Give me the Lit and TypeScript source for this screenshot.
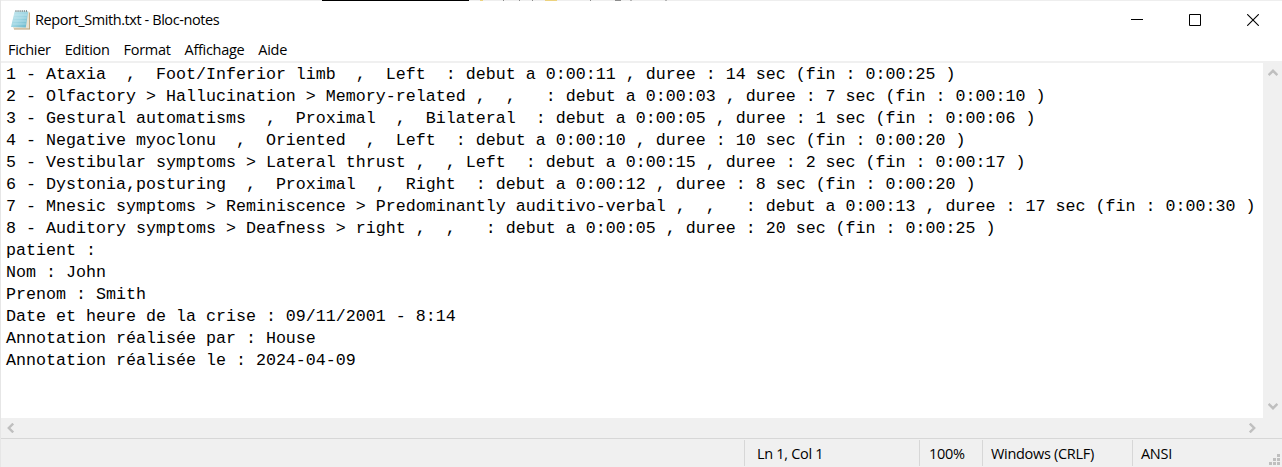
import { LitElement, html, css } from "lit";
import { customElement, property } from "lit/decorators.js";

const LINES = [
  "1 - Ataxia  ,  Foot/Inferior limb  ,  Left  : debut a 0:00:11 , duree : 14 sec (fin : 0:00:25 )",
  "2 - Olfactory > Hallucination > Memory-related ,  ,   : debut a 0:00:03 , duree : 7 sec (fin : 0:00:10 )",
  "3 - Gestural automatisms  ,  Proximal  ,  Bilateral  : debut a 0:00:05 , duree : 1 sec (fin : 0:00:06 )",
  "4 - Negative myoclonu  ,  Oriented  ,  Left  : debut a 0:00:10 , duree : 10 sec (fin : 0:00:20 )",
  "5 - Vestibular symptoms > Lateral thrust ,  , Left  : debut a 0:00:15 , duree : 2 sec (fin : 0:00:17 )",
  "6 - Dystonia,posturing  ,  Proximal  ,  Right  : debut a 0:00:12 , duree : 8 sec (fin : 0:00:20 )",
  "7 - Mnesic symptoms > Reminiscence > Predominantly auditivo-verbal ,  ,   : debut a 0:00:13 , duree : 17 sec (fin : 0:00:30 )",
  "8 - Auditory symptoms > Deafness > right ,  ,   : debut a 0:00:05 , duree : 20 sec (fin : 0:00:25 )",
  "patient :",
  "Nom : John",
  "Prenom : Smith",
  "Date et heure de la crise : 09/11/2001 - 8:14",
  "Annotation réalisée par : House",
  "Annotation réalisée le : 2024-04-09",
];

const MENUS = ["Fichier", "Edition", "Format", "Affichage", "Aide"];

@customElement("scroll-arrow")
class ScrollArrow extends LitElement {
  @property() dir = "up";
  static styles = css`
    :host { display: block; width: 10px; height: 10px; }
    svg { display: block; }
    path { fill: none; stroke: #bfbfbf; stroke-width: 2.4; }
  `;
  render() {
    const d: Record<string, string> = {
      up: "M0.6 7.2L5 2.8L9.4 7.2",
      down: "M0.6 2.8L5 7.2L9.4 2.8",
      left: "M7.2 0.6L2.8 5L7.2 9.4",
      right: "M2.8 0.6L7.2 5L2.8 9.4",
    };
    return html`<svg width="10" height="10" viewBox="0 0 10 10"><path d=${d[this.dir]} /></svg>`;
  }
}

@customElement("app-root")
class AppRoot extends LitElement {
  static styles = css`
    :host {
      display: block;
      width: 1282px;
      height: 467px;
      overflow: hidden;
      font-family: "Open Sans", "Noto Sans", sans-serif;
      font-size: 14.5px;
      color: #000;
    }
    .window {
      box-sizing: border-box;
      height: 467px;
      display: flex;
      flex-direction: column;
      background: #fff;
      border-left: 1px solid #e6e6e6;
    }
    .edge { height: 1px; flex: none; background: #eee; }
    .edge svg { display: block; }
    .title { height: 37px; flex: none; display: flex; align-items: center; padding-left: 9px; }
    .title svg { display: block; }
    .name { margin-left: 4px; flex: 1; letter-spacing: -0.42px; white-space: nowrap; }
    .controls { display: flex; gap: 46px; padding-right: 23px; }
    .menu { height: 23px; flex: none; display: flex; align-items: center; padding-left: 7px; gap: 14px; letter-spacing: -0.3px; border-bottom: 2px solid #f0f0f0; }
    .body { flex: 1; min-height: 0; display: flex; }
    .text {
      flex: 1;
      margin: 0;
      padding: 1px 0 0 5px;
      font: 16.67px/22px "Liberation Mono", monospace;
      white-space: pre;
      overflow: hidden;
    }
    .vbar { width: 19px; box-sizing: border-box; flex: none; background: #f0f0f0; display: flex; flex-direction: column; justify-content: space-between; padding: 5px 0 7px 5px; }
    .hbar { height: 20px; box-sizing: border-box; flex: none; background: #f0f0f0; display: flex; justify-content: space-between; padding: 5px 25px 0 5px; }
    .status { height: 29px; box-sizing: border-box; flex: none; background: #f0f0f0; border-top: 1px solid #d7d7d7; display: flex; padding-top: 1px; }
    .cell { box-sizing: border-box; height: 26px; border-left: 1px solid #d7d7d7; line-height: 27px; white-space: nowrap; letter-spacing: -0.3px; }
    .blank { width: 743px; flex: none; }
    .pos { width: 175px; padding-left: 12px; }
    .zoom { width: 63px; padding-left: 9px; }
    .eol { width: 150px; padding-left: 8px; }
    .enc { flex: 1; padding-left: 8px; }
    .grip { align-self: flex-end; display: block; margin: 0 2px 2px 0; }
  `;

  render() {
    return html`
      <div class="window">
        <div class="edge">
          <svg width="1281" height="1" shape-rendering="crispEdges">
            <path fill="#000" d="M321 0h147v1h-147z" />
            <path fill="#ecd27e" d="M479 0h3v1h-3zM544 0h12v1h-12z" />
            <path fill="#8c8c8c" d="M502 0h1v1h-1zM518 0h1v1h-1zM531 0h1v1h-1zM589 0h1v1h-1zM614 0h6v1h-6z" />
            <path fill="#b5b5b5" d="M629 0h2v1h-2zM664 0h2v1h-2z" />
          </svg>
        </div>
        <div class="title">
          <svg width="21" height="22" viewBox="0 0 21 22">
            <defs>
              <linearGradient id="page" x1="0" y1="0" x2="1" y2="1">
                <stop offset="0" stop-color="#c6e8ee" />
                <stop offset="0.5" stop-color="#9ed5e2" />
                <stop offset="1" stop-color="#62b4ca" />
              </linearGradient>
            </defs>
            <path fill="#b99f76" d="M5 3.5H20V20.5H4z" />
            <path fill="#e9e3d4" d="M5 2.5H19.2V19.6H3z" />
            <path fill="url(#page)" d="M4.6 2.5H18.2L15.8 18.6L1 18z" />
            <path stroke="#d4eff4" stroke-width="0.5" d="M4 6H17M3.6 9H16.6M3.2 12H16.2M2.6 15H15.8" />
            <path stroke="#66777b" stroke-width="1.6" stroke-dasharray="1.1 1" d="M5.4 2H18" />
          </svg>
          <span class="name">Report_Smith.txt - Bloc-notes</span>
          <div class="controls">
            <svg width="12" height="12"><path fill="#000" d="M0 5h12v1H0z" /></svg>
            <svg width="12" height="12"><path fill="none" stroke="#000" d="M.5 .5h11v11H.5z" /></svg>
            <svg width="12" height="12"><path fill="none" stroke="#000" stroke-width="1.1" d="M.2 .2L11.8 11.8M11.8 .2L.2 11.8" /></svg>
          </div>
        </div>
        <div class="menu">${MENUS.map((m) => html`<span>${m}</span>`)}</div>
        <div class="body">
          <pre class="text">${LINES.join("\n")}</pre>
          <div class="vbar"><scroll-arrow dir="up"></scroll-arrow><scroll-arrow dir="down"></scroll-arrow></div>
        </div>
        <div class="hbar"><scroll-arrow dir="left"></scroll-arrow><scroll-arrow dir="right"></scroll-arrow></div>
        <div class="status">
          <div class="blank"></div>
          <div class="cell pos">Ln 1, Col 1</div>
          <div class="cell zoom">100%</div>
          <div class="cell eol">Windows (CRLF)</div>
          <div class="cell enc">ANSI</div>
          <svg class="grip" width="11" height="11"><path fill="#bfbfbf" d="M8 0h3v3H8zM4 4h3v3H4zM8 4h3v3H8zM0 8h3v3H0zM4 8h3v3H4zM8 8h3v3H8z" /></svg>
        </div>
      </div>
    `;
  }
}
